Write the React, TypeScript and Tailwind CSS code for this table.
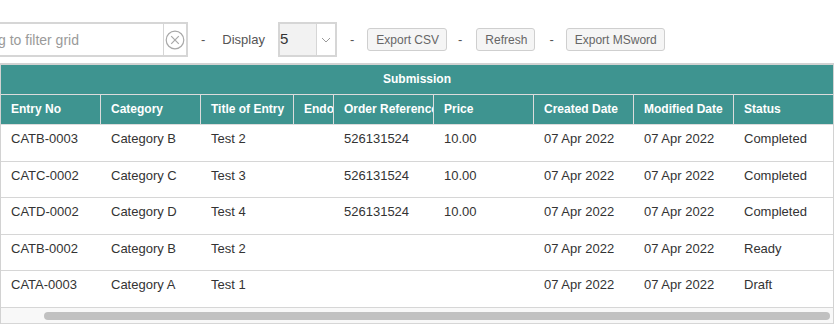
import React from 'react';

type Col = { key: string; label: string; width: string };

const columns: Col[] = [
  { key: 'entry', label: 'Entry No', width: 'w-[100px]' },
  { key: 'category', label: 'Category', width: 'w-[100px]' },
  { key: 'title', label: 'Title of Entry', width: 'w-[93px]' },
  { key: 'endorser', label: 'Endorser', width: 'w-[40px]' },
  { key: 'order', label: 'Order Reference', width: 'w-[100px]' },
  { key: 'price', label: 'Price', width: 'w-[100px]' },
  { key: 'created', label: 'Created Date', width: 'w-[100px]' },
  { key: 'modified', label: 'Modified Date', width: 'w-[100px]' },
  { key: 'status', label: 'Status', width: 'w-[99px]' },
];

const rows: Record<string, string>[] = [
  { entry: 'CATB-0003', category: 'Category B', title: 'Test 2', endorser: '', order: '526131524', price: '10.00', created: '07 Apr 2022', modified: '07 Apr 2022', status: 'Completed' },
  { entry: 'CATC-0002', category: 'Category C', title: 'Test 3', endorser: '', order: '526131524', price: '10.00', created: '07 Apr 2022', modified: '07 Apr 2022', status: 'Completed' },
  { entry: 'CATD-0002', category: 'Category D', title: 'Test 4', endorser: '', order: '526131524', price: '10.00', created: '07 Apr 2022', modified: '07 Apr 2022', status: 'Completed' },
  { entry: 'CATB-0002', category: 'Category B', title: 'Test 2', endorser: '', order: '', price: '', created: '07 Apr 2022', modified: '07 Apr 2022', status: 'Ready' },
  { entry: 'CATA-0003', category: 'Category A', title: 'Test 1', endorser: '', order: '', price: '', created: '07 Apr 2022', modified: '07 Apr 2022', status: 'Draft' },
];

const ToolButton = ({ label, className = '' }: { label: string; className?: string }) => (
  <button
    className={`h-[23px] pl-[8px] pr-[7px] rounded-[3px] border border-[#cfcfcf] bg-[#f5f5f5] text-[12px] text-[#666] leading-none whitespace-nowrap ${className}`}
  >
    {label}
  </button>
);

const Dash = ({ className = '' }: { className?: string }) => (
  <span className={`text-[13px] text-[#555] ${className}`}>-</span>
);

const ClearIcon = () => (
  <svg width="20" height="20" viewBox="0 0 20 20" fill="none" stroke="#a8a8a8" strokeWidth="1.2">
    <circle cx="10" cy="10" r="8.8" />
    <path d="M6.2 6.2 L13.8 13.8 M13.8 6.2 L6.2 13.8" />
  </svg>
);

const Chevron = () => (
  <svg width="10" height="6" viewBox="0 0 10 6" fill="none" stroke="#9a9a9a" strokeWidth="1">
    <path d="M1 1 L5 5 L9 1" />
  </svg>
);

export default function App() {
  return (
    <div className="w-[836px] h-[335px] overflow-hidden bg-white font-['Liberation_Sans',Arial,sans-serif]">
      {/* toolbar */}
      <div className="flex items-center pt-[22px] ml-[-75px]">
        <div className="flex h-[35px] border-2 border-[#d6d6d6]">
          <input
            className="w-[236px] h-full px-[8px] text-[14px] text-[#333] placeholder:text-[#9a9a9a] outline-none"
            placeholder="Start typing to filter grid"
          />
          <span className="w-[23px] flex items-center justify-center border-l border-[#d6d6d6]">
            <ClearIcon />
          </span>
        </div>
        <Dash className="ml-[13px]" />
        <span className="ml-[17px] text-[13px] text-[#555]">Display</span>
        <div className="ml-[13px] flex h-[35px] w-[59px] border-2 border-[#d6d6d6]">
          <span className="w-[36px] bg-[#f2f2f2] flex items-center text-[15px] text-[#333]">5</span>
          <span className="flex-1 flex items-center justify-center border-l border-[#d6d6d6]">
            <Chevron />
          </span>
        </div>
        <Dash className="ml-[13px]" />
        <ToolButton label="Export CSV" className="ml-[13px]" />
        <Dash className="ml-[11px]" />
        <ToolButton label="Refresh" className="ml-[14px]" />
        <Dash className="ml-[14px]" />
        <ToolButton label="Export MSword" className="ml-[12px]" />
      </div>

      {/* grid */}
      <div className="mt-[6px] w-[834px] border-t-2 border-x border-[#d2d2d2]">
        <div className="h-[30px] pb-[2px] bg-[#3e9490] border-b border-[#dcdcdc] flex items-center justify-center text-[12px] font-bold text-white">
          Submission
        </div>
        <div className="flex h-[30px] bg-[#3e9490] border-b border-[#dcdcdc]">
          {columns.map((c, i) => (
            <div
              key={c.key}
              className={`${c.width} shrink-0 overflow-hidden whitespace-nowrap pl-[10px] pb-[1px] flex items-center text-[12px] font-bold text-white ${i < columns.length - 1 ? 'border-r border-[#dcdcdc]' : ''}`}
            >
              {c.label}
            </div>
          ))}
        </div>
        {rows.map((r, ri) => (
          <div key={ri} className="flex h-[36.6px] border-b border-[#d6d6d6]">
            {columns.map((c) => (
              <div
                key={c.key}
                className={`${c.width} shrink-0 overflow-hidden whitespace-nowrap pl-[10px] pt-[5px] text-[13px] leading-[17px] text-[#333]`}
              >
                {r[c.key]}
              </div>
            ))}
          </div>
        ))}
        {/* horizontal scrollbar */}
        <div className="h-[16px] flex bg-[#f8f8f8] border-b border-[#d6d6d6] pl-[43px] pr-[3px] pt-[4px]">
          <div className="flex-1 h-[8px] rounded-full bg-[#c1c1c1]" />
        </div>
      </div>
    </div>
  );
}
